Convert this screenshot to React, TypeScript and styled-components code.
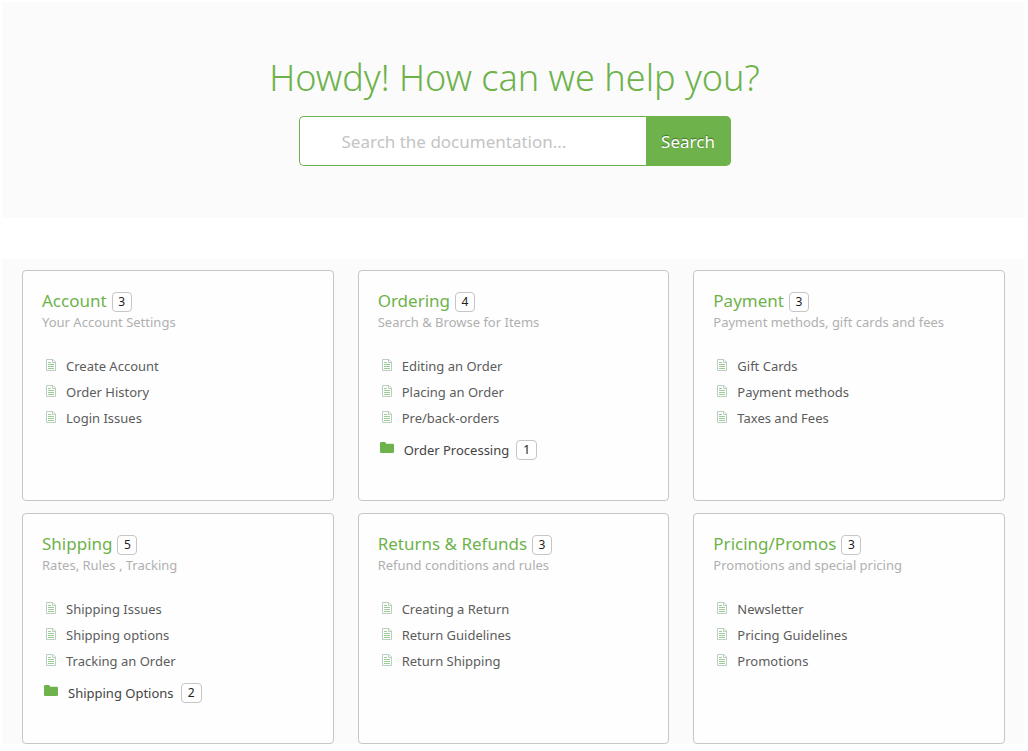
import React from "react";
import styled, { createGlobalStyle } from "styled-components";

const green = "#6eb24b";

const GlobalStyle = createGlobalStyle`
  * { box-sizing: border-box; }
  body {
    margin: 0;
    background: #fff;
    font-family: "Noto Sans", "Open Sans", sans-serif;
    color: #555;
  }
`;

const Page = styled.div`
  display: flex;
  flex-direction: column;
  gap: 41px;
  padding: 2px 3px 7px 2px;
`;

const Hero = styled.header`
  display: flex;
  flex-direction: column;
  align-items: center;
  gap: 13px;
  padding: 51px 18px 52px 20px;
  background: #fbfbfb;
`;

const Heading = styled.h1`
  margin: 0;
  font-size: 36px;
  font-weight: 300;
  line-height: 50px;
  color: ${green};
`;

const SearchForm = styled.form`
  display: flex;
  width: 432px;
  max-width: 100%;
  height: 50px;
`;

const SearchInput = styled.input`
  flex: 1;
  min-width: 0;
  padding: 0 12px 0 42px;
  border: 1px solid ${green};
  border-right: 0;
  border-radius: 5px 0 0 5px;
  background: #fff;
  font-family: inherit;
  font-size: 17px;
  color: #555;
  outline: none;

  &::placeholder {
    color: #c4c4c4;
    opacity: 1;
  }
`;

const SearchButton = styled.button`
  width: 85px;
  padding: 0;
  border: 0;
  border-radius: 0 5px 5px 0;
  background: ${green};
  font-family: inherit;
  font-size: 17px;
  color: #fff;
  text-shadow: 0 -1px 1px rgba(0, 0, 0, 0.4);
  cursor: pointer;
`;

const Grid = styled.main`
  display: grid;
  grid-template-columns: repeat(3, 1fr);
  gap: 12px 24px;
  padding: 11px 20px 0;
  background: #fbfbfb;
`;

const Card = styled.section`
  min-height: 231px;
  padding: 19px;
  border: 1px solid #c6c6c6;
  border-radius: 4px;
  background: #fefefe;
`;

const CardTitle = styled.h2`
  display: flex;
  align-items: center;
  gap: 5px;
  margin: 0;
  font-size: 17px;
  font-weight: 400;
  line-height: 22px;
`;

const TitleLink = styled.a`
  color: ${green};
  text-decoration: none;
`;

const Badge = styled.span`
  min-width: 20px;
  height: 20px;
  margin-top: 2px;
  border: 1px solid #c6c6c6;
  border-radius: 4px;
  background: #fff;
  font-size: 12px;
  line-height: 18px;
  text-align: center;
  color: #222;
`;

const FolderBadge = styled(Badge)`
  min-width: 21px;
  margin-top: 0;
`;

const Description = styled.p`
  margin: 0;
  font-size: 13px;
  line-height: 20px;
  color: #b0b0b0;
`;

const Articles = styled.ul`
  margin: 21px 0 0;
  padding: 0;
  list-style: none;
`;

const Article = styled.li<{ $folder?: boolean }>`
  display: flex;
  align-items: center;
  gap: ${(p) => (p.$folder ? 7 : 0)}px;
  height: 26px;
  margin-top: ${(p) => (p.$folder ? 6 : 0)}px;
  padding-left: ${(p) => (p.$folder ? 2 : 4)}px;
`;

const ArticleLink = styled.a<{ $folder?: boolean }>`
  display: flex;
  align-items: center;
  gap: 10px;
  font-size: 13px;
  line-height: 26px;
  color: ${(p) => (p.$folder ? "#444" : "#5c5c5c")};
  text-decoration: none;

  svg {
    flex: none;
    margin-bottom: ${(p) => (p.$folder ? 5 : 2)}px;
  }
`;

const DocIcon = () => (
  <svg width="10" height="12" viewBox="0 0 10 12" fill="none" aria-hidden="true">
    <path d="M.5.5H7L9.5 3v8.500H.5Z" stroke="#b9cfc0" />
    <path d="M6.500.5V3.500H9.500" stroke="#b9cfc0" />
    <path d="M2 3.500h3M2 5.500h6M2 7.500h6M2 9.500h6" stroke="#9ccb98" />
  </svg>
);

const FolderIcon = () => (
  <svg width="14" height="12" viewBox="0 0 14 12" aria-hidden="true">
    <path
      d="M1.200 0H4.600Q5.500 0 5.800.9L6.100 1.700H12.800Q14 1.700 14 2.900V9.800Q14 11 12.800 11H1.200Q0 11 0 9.800V1.200Q0 0 1.200 0Z"
      fill={green}
    />
  </svg>
);

type Topic = {
  title: string;
  count: number;
  description: string;
  articles: string[];
  folder?: { name: string; count: number };
};

const topics: Topic[] = [
  {
    title: "Account",
    count: 3,
    description: "Your Account Settings",
    articles: ["Create Account", "Order History", "Login Issues"],
  },
  {
    title: "Ordering",
    count: 4,
    description: "Search & Browse for Items",
    articles: ["Editing an Order", "Placing an Order", "Pre/back-orders"],
    folder: { name: "Order Processing", count: 1 },
  },
  {
    title: "Payment",
    count: 3,
    description: "Payment methods, gift cards and fees",
    articles: ["Gift Cards", "Payment methods", "Taxes and Fees"],
  },
  {
    title: "Shipping",
    count: 5,
    description: "Rates, Rules , Tracking",
    articles: ["Shipping Issues", "Shipping options", "Tracking an Order"],
    folder: { name: "Shipping Options", count: 2 },
  },
  {
    title: "Returns & Refunds",
    count: 3,
    description: "Refund conditions and rules",
    articles: ["Creating a Return", "Return Guidelines", "Return Shipping"],
  },
  {
    title: "Pricing/Promos",
    count: 3,
    description: "Promotions and special pricing",
    articles: ["Newsletter", "Pricing Guidelines", "Promotions"],
  },
];

const TopicCard = ({ topic }: { topic: Topic }) => (
  <Card>
    <CardTitle>
      <TitleLink href="#">{topic.title}</TitleLink>
      <Badge>{topic.count}</Badge>
    </CardTitle>
    <Description>{topic.description}</Description>
    <Articles>
      {topic.articles.map((name) => (
        <Article key={name}>
          <ArticleLink href="#">
            <DocIcon />
            {name}
          </ArticleLink>
        </Article>
      ))}
      {topic.folder && (
        <Article $folder>
          <ArticleLink href="#" $folder>
            <FolderIcon />
            {topic.folder.name}
          </ArticleLink>
          <FolderBadge>{topic.folder.count}</FolderBadge>
        </Article>
      )}
    </Articles>
  </Card>
);

export default function App() {
  return (
    <>
      <GlobalStyle />
      <Page>
        <Hero>
          <Heading>Howdy! How can we help you?</Heading>
          <SearchForm role="search" onSubmit={(e) => e.preventDefault()}>
            <SearchInput
              type="text"
              aria-label="Search the documentation"
              placeholder="Search the documentation..."
            />
            <SearchButton type="submit">Search</SearchButton>
          </SearchForm>
        </Hero>
        <Grid>
          {topics.map((topic) => (
            <TopicCard key={topic.title} topic={topic} />
          ))}
        </Grid>
      </Page>
    </>
  );
}
